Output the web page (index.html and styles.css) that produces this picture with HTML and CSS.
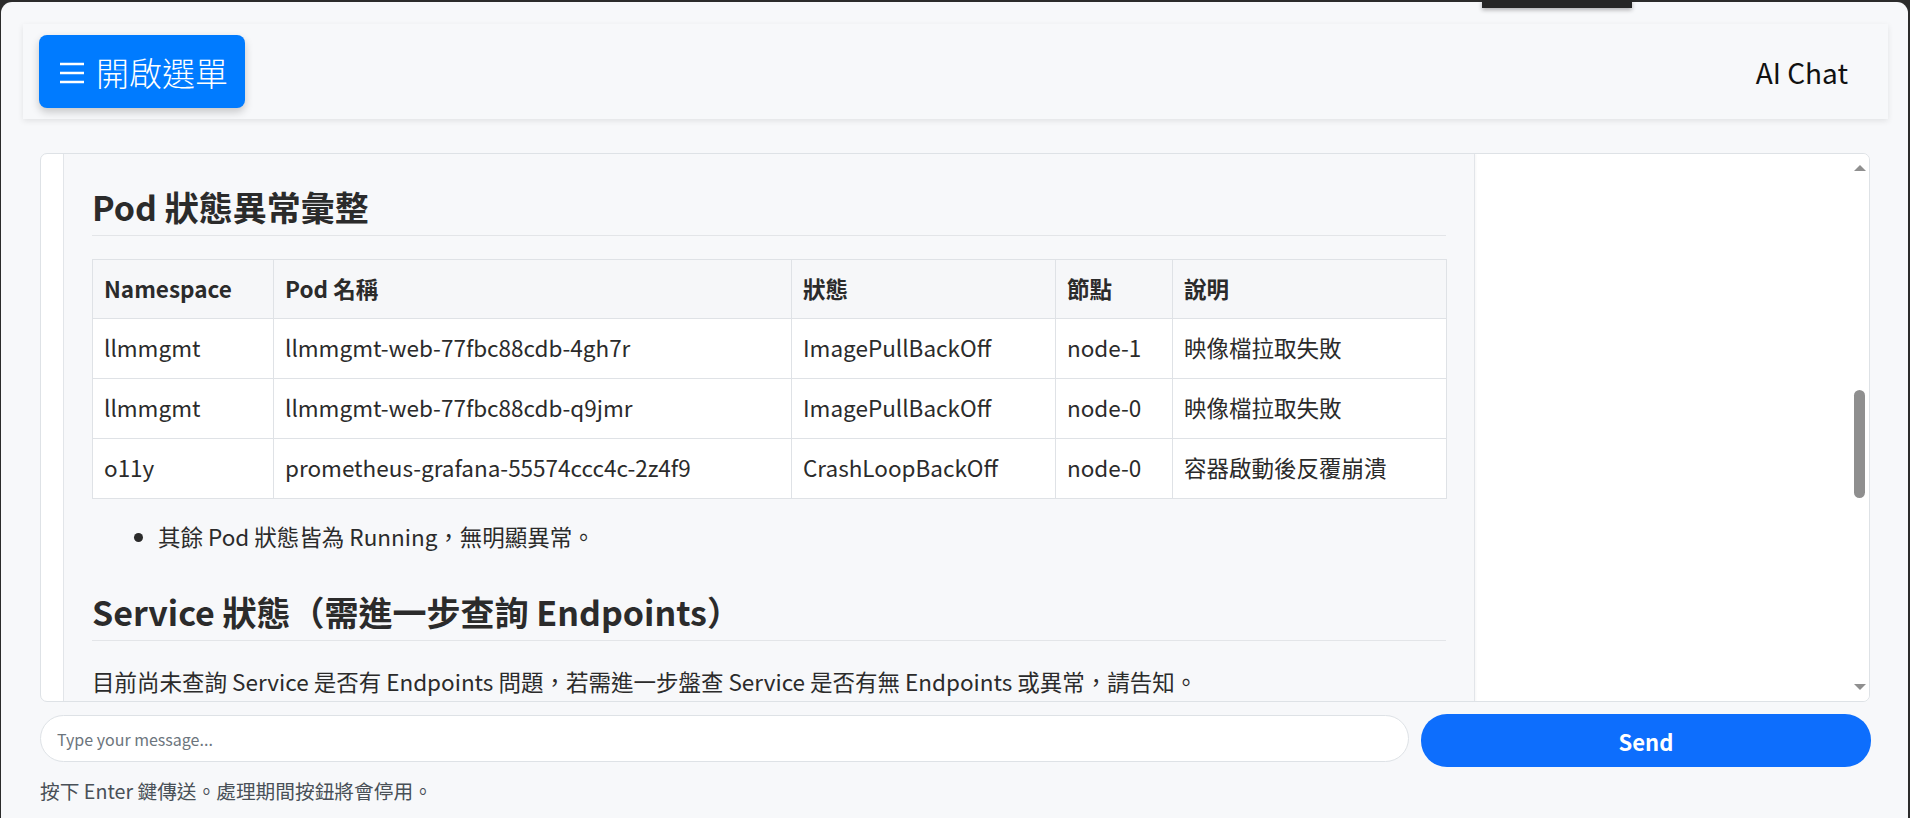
FILE: index.html
```html
<!DOCTYPE html>
<html lang="zh-Hant">
<head>
<meta charset="utf-8">
<title>AI Chat</title>
<link rel="stylesheet" href="styles.css">
</head>
<body>
<div class="notch"></div>
<div class="window">
  <header class="topbar">
    <button class="menu-btn" type="button"><svg class="burger" width="26" height="24" viewBox="0 0 26 24"><path d="M1 3h24M1 12h24M1 21h24" stroke="#fff" stroke-width="2.4" fill="none"/></svg>開啟選單</button>
    <div class="brand">AI Chat</div>
  </header>
  <main class="main">
    <section class="chat">
      <div class="bubble">
        <h2 class="md-h first">Pod 狀態異常彙整</h2>
        <table class="md-table">
          <colgroup>
            <col class="c1"><col class="c2"><col class="c3"><col class="c4"><col class="c5">
          </colgroup>
          <thead>
            <tr><th>Namespace</th><th>Pod 名稱</th><th>狀態</th><th>節點</th><th>說明</th></tr>
          </thead>
          <tbody>
            <tr><td>llmmgmt</td><td>llmmgmt-web-77fbc88cdb-4gh7r</td><td>ImagePullBackOff</td><td>node-1</td><td>映像檔拉取失敗</td></tr>
            <tr><td>llmmgmt</td><td>llmmgmt-web-77fbc88cdb-q9jmr</td><td>ImagePullBackOff</td><td>node-0</td><td>映像檔拉取失敗</td></tr>
            <tr><td>o11y</td><td>prometheus-grafana-55574ccc4c-2z4f9</td><td>CrashLoopBackOff</td><td>node-0</td><td>容器啟動後反覆崩潰</td></tr>
          </tbody>
        </table>
        <ul class="md-list">
          <li>其餘 Pod 狀態皆為 Running，無明顯異常。</li>
        </ul>
        <h2 class="md-h second">Service 狀態（需進一步查詢 Endpoints）</h2>
        <p class="md-p">目前尚未查詢 Service 是否有 Endpoints 問題，若需進一步盤查 Service 是否有無 Endpoints 或異常，請告知。</p>
      </div>
      <div class="scrollbar">
        <span class="arrow up"></span>
        <span class="thumb"></span>
        <span class="arrow down"></span>
      </div>
    </section>
    <form class="composer">
      <input class="msg-input" type="text" placeholder="Type your message...">
      <button class="send-btn" type="button">Send</button>
    </form>
    <p class="hint">按下 Enter 鍵傳送。處理期間按鈕將會停用。</p>
  </main>
</div>
</body>
</html>
```
FILE: styles.css
```css
* { box-sizing: border-box; }
html, body { margin: 0; height: 100%; }
body {
  background: #2b2b2b;
  font-family: "Noto Sans CJK TC", "Noto Sans", sans-serif;
  color: #212529;
  overflow: hidden;
  position: relative;
}
.notch {
  position: absolute;
  top: 0;
  left: 1482px;
  width: 150px;
  height: 8px;
  background: #262626;
  box-shadow: 0 2px 4px rgba(0,0,0,.3);
  z-index: 5;
}
.window {
  margin: 2px 2px 0 1px;
  height: 816px;
  background: #f7f8fa;
  border-radius: 11px 11px 0 0;
  padding: 22px 20px 0 22px;
}
.topbar {
  height: 95px;
  background: #f7f8fa;
  box-shadow: 0 2px 6px rgba(0,0,0,.09);
  display: flex;
  align-items: center;
  justify-content: space-between;
  padding: 0 40px 0 16px;
}
.menu-btn {
  height: 73px;
  padding: 0 17px 0 20px;
  background: #007bff;
  color: #fff;
  border: 0;
  border-radius: 8px;
  font-family: "Noto Sans CJK TC", sans-serif;
  font-size: 33px;
  font-weight: 300;
  box-shadow: 0 4px 9px rgba(0,0,0,.2);
  display: flex;
  align-items: center;
}
.burger { margin-right: 11px; margin-top: 2px; }
.brand { font-size: 28px; color: #111; }
.main { padding: 34px 18px 0 17px; }
.chat {
  position: relative;
  height: 549px;
  background: #fff;
  border: 1px solid #dee2e6;
  border-radius: 7px;
  overflow: hidden;
  padding-left: 22px;
}
.bubble {
  width: 1412px;
  height: 700px;
  background: #f7f8fa;
  border: 1px solid #e2e5e9;
  border-top: 0;
  box-shadow: 1px 0 2px rgba(0,0,0,.04);
  padding: 32px 28px 0;
  font-size: 22.5px;
  color: #2b2b2b;
}
.md-h {
  font-size: 34px;
  font-weight: 700;
  line-height: 1.25;
  margin: 0;
  padding-bottom: 6px;
  border-bottom: 1px solid #e3e5e8;
  color: #2b2b2b;
}
.md-table {
  margin-top: 23px;
  width: 1354px;
  border-collapse: collapse;
  table-layout: fixed;
  font-size: 22.5px;
}
.c1 { width: 181px; } .c2 { width: 518px; } .c3 { width: 264px; } .c4 { width: 117px; } .c5 { width: 274px; }
.md-table th, .md-table td {
  border: 1px solid #dfe2e6;
  padding: 12px 11px 13px;
  line-height: 1.5;
  text-align: left;
  white-space: nowrap;
}
.md-table th { background: #f6f7f9; font-weight: 700; }
.md-table td { background: #fff; font-weight: 400; }
.md-list {
  margin: 21px 0 0;
  padding-left: 66px;
  line-height: 1.5;
}
.md-h.second { margin-top: 38px; }
.md-p { margin: 24px 0 0; line-height: 1.5; }
.scrollbar {
  position: absolute;
  top: 0; right: 0; bottom: 0;
  width: 19px;
  background: #fff;
}
.arrow {
  position: absolute;
  left: 4px;
  width: 0; height: 0;
  border-left: 6px solid transparent;
  border-right: 6px solid transparent;
}
.arrow.up { top: 11px; border-bottom: 6px solid #8f8f8f; }
.arrow.down { bottom: 11px; border-top: 6px solid #8f8f8f; }
.thumb {
  position: absolute;
  left: 4px;
  top: 236px;
  width: 11px;
  height: 108px;
  border-radius: 6px;
  background: #8f8f8f;
}
.composer {
  display: flex;
  align-items: flex-start;
  gap: 12px;
  margin: 12px -1px 0 0;
}
.msg-input {
  flex: 1;
  height: 47px;
  margin-top: 1px;
  border: 1px solid #dee2e6;
  border-radius: 24px;
  padding: 0 16px;
  font-family: "Noto Sans CJK TC", sans-serif;
  font-size: 16px;
  color: #212529;
  background: #fff;
  outline: none;
}
.msg-input::placeholder { color: #6c757d; }
.send-btn {
  width: 450px;
  height: 53px;
  background: #0d6efd;
  color: #fff;
  border: 0;
  border-radius: 26px;
  font-family: "Noto Sans CJK TC", sans-serif;
  font-size: 22px;
  font-weight: 700;
}
.hint {
  margin: 9px 0 0;
  font-size: 19.7px;
  line-height: 1.5;
  color: #495057;
}
```
